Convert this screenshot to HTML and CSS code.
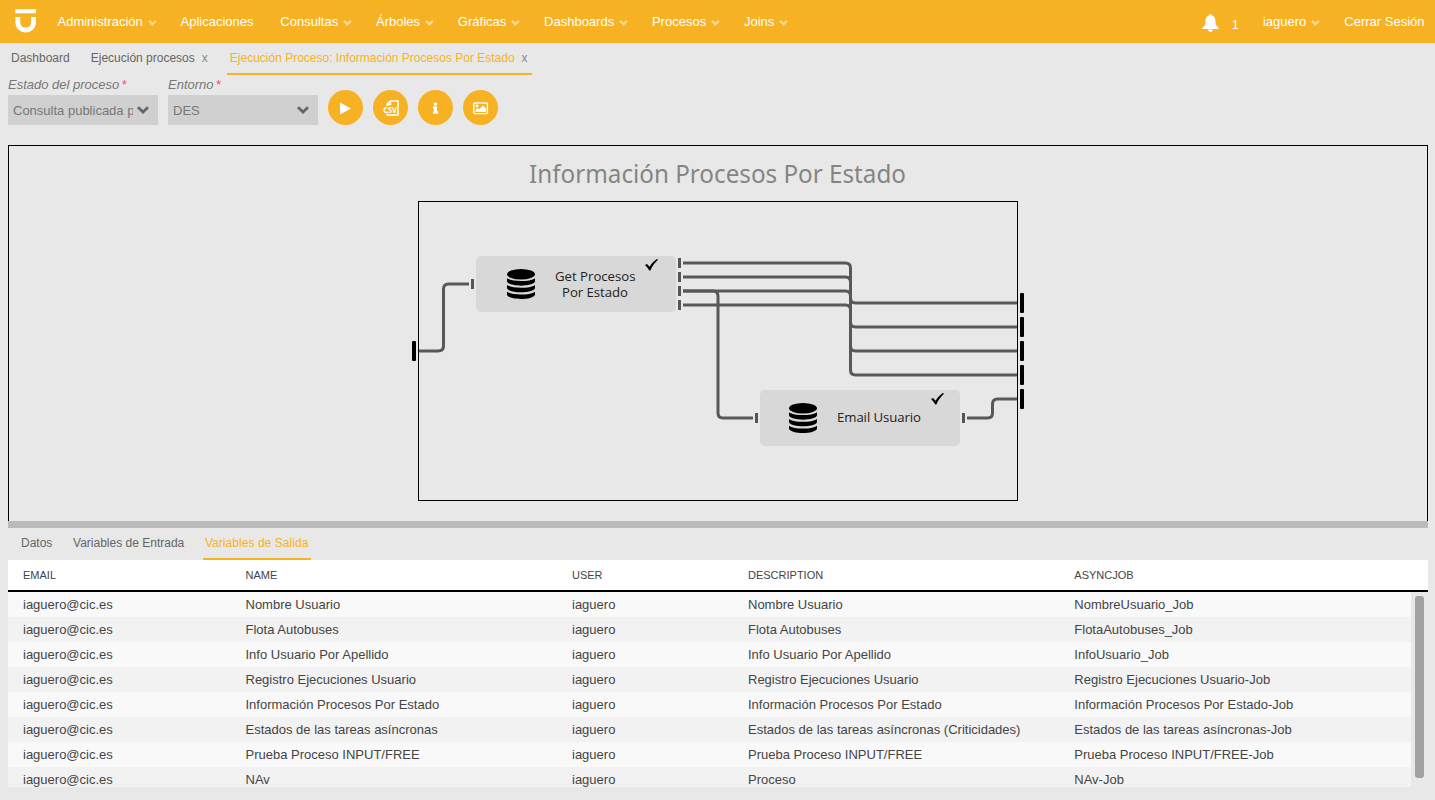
FILE: index.html
```html
<!DOCTYPE html>
<html lang="es">
<head>
<meta charset="utf-8">
<title>Ejecución Proceso</title>
<link rel="stylesheet" href="styles.css">
</head>
<body>
<svg width="0" height="0" class="defs" aria-hidden="true">
  <symbol id="chev" viewBox="0 0 9 6"><path d="M1 .9 L4.500 4.200 L8 .9" fill="none" stroke="currentColor" stroke-width="2.300"/></symbol>
  <symbol id="db" viewBox="0 0 28 30">
    <ellipse cx="14" cy="5.2" rx="14" ry="5.2"/>
    <path d="M0 9.2 C5 13 23 13 28 9.2 V12.5 C26 18 2 18 0 12.5Z"/>
    <path d="M0 16 C5 19.800 23 19.800 28 16 V19.2 C26 24.7 2 24.7 0 19.2Z"/>
    <path d="M0 22.700 C5 26.500 23 26.500 28 22.700 V25.7 C26 31.4 2 31.4 0 25.7Z"/>
  </symbol>
  <symbol id="tick" viewBox="0 0 13 12"><path d="M0 6 L2 5 L4.600 7.800 C6.400 4.800 8.800 2 11.900 0 L13 .7 C10 3.6 7.2 7 5.4 11.4 L4.3 11.4 C3 9.4 1.6 7.8 0 6Z"/></symbol>
</svg>

<header class="topbar">
  <svg class="logo" width="22" height="24" viewBox="0 0 22 24"><path d="M.3 .2H21V4.300H.3Z" fill="#fff"/><path d="M2.800 8V13C2.800 18 6 21 10.700 21S18.500 18 18.500 13V8" fill="none" stroke="#fff" stroke-width="4.800"/></svg>
  <nav class="menu">
    <a>Administración<svg class="chev"><use href="#chev"/></svg></a>
    <a class="plain">Aplicaciones</a>
    <a>Consultas<svg class="chev"><use href="#chev"/></svg></a>
    <a>Árboles<svg class="chev"><use href="#chev"/></svg></a>
    <a>Gráficas<svg class="chev"><use href="#chev"/></svg></a>
    <a>Dashboards<svg class="chev"><use href="#chev"/></svg></a>
    <a>Procesos<svg class="chev"><use href="#chev"/></svg></a>
    <a>Joins<svg class="chev"><use href="#chev"/></svg></a>
  </nav>
  <div class="session">
    <svg class="bell" width="17" height="18" viewBox="0 0 17 18"><path d="M8.5 0C9.2 0 9.6.5 9.6 1.3C12.2 1.9 13.3 4 13.4 6.5C13.6 10.5 14.4 12 16.7 14V15H.3V14C2.6 12 3.4 10.5 3.6 6.5C3.7 4 4.8 1.9 7.4 1.3C7.4.5 7.8 0 8.5 0ZM6 15.5H11C10.8 17 9.8 17.9 8.5 17.9S6.2 17 6 15.5Z" fill="#fff"/></svg>
    <span class="count">1</span>
    <a class="user">iaguero<svg class="chev"><use href="#chev"/></svg></a>
    <a>Cerrar Sesión</a>
  </div>
</header>

<div class="tabs">
  <div class="tab">Dashboard</div>
  <div class="tab closable">Ejecución procesos<span class="close">x</span></div>
  <div class="tab active">Ejecución Proceso: Información Procesos Por Estado<span class="close">x</span></div>
</div>

<div class="toolbar">
  <div class="field">
    <label>Estado del proceso<b>*</b></label>
    <div class="select"><span>Consulta publicada p</span><svg width="12" height="8" viewBox="0 0 12 8"><path d="M1 1.3L6 6L11 1.3" fill="none" stroke="#65656d" stroke-width="2.8"/></svg></div>
  </div>
  <div class="field">
    <label>Entorno<b>*</b></label>
    <div class="select"><span>DES</span><svg width="12" height="8" viewBox="0 0 12 8"><path d="M1 1.3L6 6L11 1.3" fill="none" stroke="#65656d" stroke-width="2.8"/></svg></div>
  </div>
  <div class="actions">
    <button class="round"><svg viewBox="0 0 35 35"><path d="M12 12.500L23 18.500L12 24.500Z" fill="#fff"/></svg></button>
    <button class="round"><svg viewBox="0 0 35 35"><path d="M14.200 16V14L17.200 11H25V25H14.200V23M14.200 14.500H17.500V11" fill="none" stroke="#fff" stroke-width="1.5"/><text class="csv" x="10.2" y="22.5" textLength="13.6" lengthAdjust="spacingAndGlyphs">CSV</text></svg></button>
    <button class="round"><svg viewBox="0 0 35 35"><path d="M15.800 12.800H19V15.500H15.800ZM15 16.500H19V21.5H20.200V23.800H15V21.5H16V18.700H15Z" fill="#fff"/></svg></button>
    <button class="round"><svg viewBox="0 0 35 35"><rect x="10.8" y="13" width="13.6" height="10.6" rx="1" fill="none" stroke="#fff" stroke-width="1.4"/><circle cx="14" cy="16" r="1.4" fill="#fff"/><path d="M12.5 22V20L14.500 18L16.5 19.2L19.800 15.5L23 18.5V22Z" fill="#fff"/></svg></button>
  </div>
</div>

<section class="canvas">
  <svg width="1418" height="375" viewBox="9 146 1418 375">
    <text class="title" x="529" y="183" textLength="377" lengthAdjust="spacingAndGlyphs">Información Procesos Por Estado</text>
    <rect class="frame" x="418.5" y="201.5" width="599" height="299"/>
    <g class="wires">
      <path d="M419 351H438Q443.500 351 443.500 346V289Q443.500 284 448.500 284H469"/>
      <path d="M683 263H845.500Q850.500 263 850.500 268V298Q850.500 303 855.500 303H1017"/>
      <path d="M683 277H845.500Q850.500 277 850.500 282V322Q850.500 327 855.500 327H1017"/>
      <path d="M683 291H845.500Q850.500 291 850.500 296V346Q850.500 351 855.500 351H1017"/>
      <path d="M683 305H845.500Q850.500 305 850.500 310V370Q850.500 375 855.500 375H1017"/>
      <path d="M683 291H713Q718 291 718 296V413Q718 418 723 418H753"/>
      <path d="M967 418H987.500Q992.500 418 992.500 413V404Q992.500 399 997.500 399H1017"/>
    </g>
    <g class="ports">
      <rect x="412" y="341" width="4" height="20" rx="1"/>
      <rect x="1020" y="293" width="4" height="20" rx="1"/>
      <rect x="1020" y="317" width="4" height="20" rx="1"/>
      <rect x="1020" y="341" width="4" height="20" rx="1"/>
      <rect x="1020" y="365" width="4" height="20" rx="1"/>
      <rect x="1020" y="389" width="4" height="20" rx="1"/>
    </g>
    <g class="pins">
      <rect x="471" y="279" width="3" height="10"/>
      <rect x="678" y="258" width="3" height="10"/>
      <rect x="678" y="272" width="3" height="10"/>
      <rect x="678" y="286" width="3" height="10"/>
      <rect x="678" y="300" width="3" height="10"/>
      <rect x="755" y="413" width="3" height="10"/>
      <rect x="962" y="413" width="3" height="10"/>
    </g>
    <g class="node">
      <rect x="476" y="256" width="200" height="56" rx="5"/>
      <use href="#db" x="507" y="269" width="28" height="30"/>
      <text x="555" y="281" textLength="80.500">Get Procesos</text>
      <text x="562" y="297" textLength="66">Por Estado</text>
      <use href="#tick" x="645" y="259" width="13" height="12"/>
    </g>
    <g class="node">
      <rect x="760" y="390" width="200" height="56" rx="5"/>
      <use href="#db" x="789" y="403" width="28" height="30"/>
      <text x="837" y="422" textLength="84">Email Usuario</text>
      <use href="#tick" x="931" y="393" width="13" height="12"/>
    </g>
  </svg>
</section>

<div class="splitter"></div>
<div class="subtabs">
  <div class="subtab">Datos</div>
  <div class="subtab">Variables de Entrada</div>
  <div class="subtab active">Variables de Salida</div>
</div>

<section class="grid">
  <div class="row head"><span>EMAIL</span><span>NAME</span><span>USER</span><span>DESCRIPTION</span><span>ASYNCJOB</span></div>
  <div class="body">
    <div class="rows">
      <div class="row"><span>iaguero@cic.es</span><span>Nombre Usuario</span><span>iaguero</span><span>Nombre Usuario</span><span>NombreUsuario_Job</span></div>
      <div class="row"><span>iaguero@cic.es</span><span>Flota Autobuses</span><span>iaguero</span><span>Flota Autobuses</span><span>FlotaAutobuses_Job</span></div>
      <div class="row"><span>iaguero@cic.es</span><span>Info Usuario Por Apellido</span><span>iaguero</span><span>Info Usuario Por Apellido</span><span>InfoUsuario_Job</span></div>
      <div class="row"><span>iaguero@cic.es</span><span>Registro Ejecuciones Usuario</span><span>iaguero</span><span>Registro Ejecuciones Usuario</span><span>Registro Ejecuciones Usuario-Job</span></div>
      <div class="row"><span>iaguero@cic.es</span><span>Información Procesos Por Estado</span><span>iaguero</span><span>Información Procesos Por Estado</span><span>Información Procesos Por Estado-Job</span></div>
      <div class="row"><span>iaguero@cic.es</span><span>Estados de las tareas asíncronas</span><span>iaguero</span><span>Estados de las tareas asíncronas (Criticidades)</span><span>Estados de las tareas asíncronas-Job</span></div>
      <div class="row"><span>iaguero@cic.es</span><span>Prueba Proceso INPUT/FREE</span><span>iaguero</span><span>Prueba Proceso INPUT/FREE</span><span>Prueba Proceso INPUT/FREE-Job</span></div>
      <div class="row"><span>iaguero@cic.es</span><span>NAv</span><span>iaguero</span><span>Proceso</span><span>NAv-Job</span></div>
    </div>
    <div class="track"><div class="thumb"></div></div>
  </div>
</section>
</body>
</html>
```
FILE: styles.css
```css
* { box-sizing: border-box; }
body {
  margin: 0;
  height: 800px;
  overflow: hidden;
  background: #e8e8e8;
  font: 13px/15px "Liberation Sans", Arial, sans-serif;
  color: #444;
}
.defs { display: block; }
.topbar {
  display: flex;
  align-items: center;
  height: 43px;
  padding: 0 10.5px 0 15px;
  background: #f7b223;
  color: #fff;
}
.logo { margin-bottom: 1px; }
.menu { display: flex; gap: 23.8px; margin-left: 20.5px; }
.menu a, .session a { display: flex; align-items: center; white-space: nowrap; }
.menu .plain { margin-right: 3px; }
.chev { width: 9px; height: 6px; margin: 3px 0 0 5px; color: #fbd88d; }
.session { display: flex; align-items: center; margin-left: auto; }
.count { margin: 5px 24px 0 13px; }
.bell { margin-top: 2px; }
.user { margin-right: 24px; }

.tabs {
  display: flex;
  height: 32px;
  padding-left: 11px;
  font-size: 12px;
  color: #666;
}
.tab { height: 32px; padding-top: 8px; white-space: nowrap; }
.closable { margin-left: 21px; }
.close { margin-left: 7px; color: #888; }
.tab.active {
  margin-left: 19px;
  padding-left: 3px;
  padding-right: 4px;
  border-bottom: 2px solid #f7b223;
  color: #f7b223;
}

.toolbar { display: flex; gap: 10px; height: 70px; padding: 2px 8px 0; }
.field { width: 150px; }
.field label { display: block; height: 18px; font-style: italic; color: #777; }
.field b { margin-left: 2px; font-weight: normal; color: #f0506e; }
.select {
  display: flex;
  align-items: center;
  justify-content: space-between;
  height: 30px;
  padding: 0 9px 0 5px;
  background: #d0d0d0;
  color: #777;
}
.select span { max-width: 120px; overflow: hidden; white-space: nowrap; }
.actions { display: flex; gap: 10px; padding-top: 13px; }
.round { width: 35px; height: 35px; padding: 0; border: 0; border-radius: 50%; background: #f7b223; }
.round svg { display: block; width: 35px; height: 35px; }
.csv { font: bold 8px "Open Sans", sans-serif; fill: #fff; stroke: #f7b223; stroke-width: 1px; paint-order: stroke; }

.canvas { height: 376px; margin: 0 7px 0 8px; border: 1px solid #000; border-bottom: 0; }
.canvas svg { display: block; }
.title { font: 25px "Noto Sans", sans-serif; fill: #858585; }
.frame { fill: none; stroke: #000; }
.wires path { fill: none; stroke: #585858; stroke-width: 3; }
.pins rect { fill: #555; }
.node rect { fill: #d8d8d8; }
.node text { font: 13.2px "Open Sans", sans-serif; fill: #222; }

.splitter { height: 7px; margin: 0 7px 0 8px; background: #bbb; }
.subtabs { display: flex; height: 32px; padding-left: 21px; font-size: 12px; color: #666; }
.subtab { padding-top: 8px; margin-right: 20.7px; }
.subtab.active { margin: 0 0 0 -2px; padding-left: 2px; padding-right: 3px; border-bottom: 2px solid #f7b223; color: #f7b223; letter-spacing: 0.05px; }

.grid { margin: 0 7px 0 8px; }
.row { display: grid; grid-template-columns: 222.5px 326.5px 176px 326.3px 351.7px; height: 25px; align-items: center; background: #f9f9f9; white-space: nowrap; }
.row span { padding-left: 15px; }
.row:nth-child(even) { background: #f2f2f2; }
.row.head { height: 32px; background: #fff; border-bottom: 2px solid #000; font-size: 11px; }
.body { display: flex; height: 195px; overflow: hidden; }
.rows { width: 1403px; }
.track { padding: 4px 4px; }
.thumb { width: 9px; height: 182px; border-radius: 3px; background: #a2a2a2; }
```
